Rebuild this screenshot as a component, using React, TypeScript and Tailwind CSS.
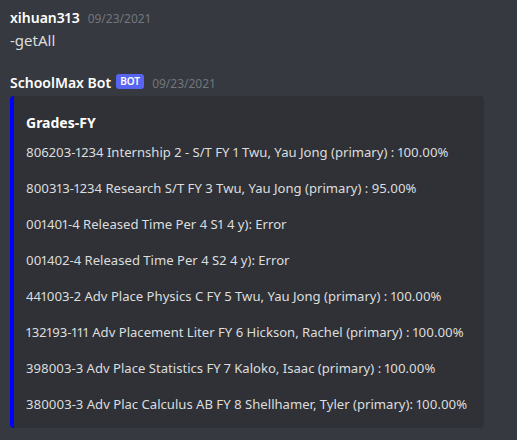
import React from "react";

const lines = [
  "806203-1234 Internship 2 - S/T FY 1 Twu, Yau Jong (primary) : 100.00%",
  "800313-1234 Research S/T FY 3 Twu, Yau Jong (primary) : 95.00%",
  "001401-4 Released Time Per 4 S1 4 y): Error",
  "001402-4 Released Time Per 4 S2 4 y): Error",
  "441003-2 Adv Place Physics C FY 5 Twu, Yau Jong (primary) : 100.00%",
  "132193-111 Adv Placement Liter FY 6 Hickson, Rachel (primary) : 100.00%",
  "398003-3 Adv Place Statistics FY 7 Kaloko, Isaac (primary) : 100.00%",
  "380003-3 Adv Plac Calculus AB FY 8 Shellhamer, Tyler (primary): 100.00%",
];

export default function App() {
  return (
    <div
      className="bg-[#36393f] min-h-[440px] w-[517px] overflow-hidden text-[#dcddde]"
      style={{ fontFamily: "'Noto Sans', sans-serif" }}
    >
      <div className="pl-[10px] pt-[7px]">
        <div className="flex items-baseline h-[22px]">
          <span className="text-[14px] leading-[22px] font-semibold text-white proportional-nums">xihuan313</span>
          <span className="ml-[8px] text-[12px] text-[#72767d]">09/23/2021</span>
        </div>
        <div className="text-[15px] leading-[22px]">-getAll</div>
      </div>
      <div className="pl-[10px] mt-[21px]">
        <div className="flex items-baseline h-[22px]">
          <span className="text-[14px] leading-[22px] font-semibold text-white">SchoolMax Bot</span>
          <span className="relative -top-[3px] ml-[5px] h-[15px] w-[28px] rounded-[3px] bg-[#5865f2] text-white text-[10px] leading-[15px] font-semibold text-center">
            BOT
          </span>
          <span className="ml-[8px] text-[12px] text-[#72767d]">09/23/2021</span>
        </div>
        <div className="mt-[2px] w-[474px] bg-[#2f3136] border-l-4 border-[#0000ff] rounded-[4px] pl-[12px] pr-[16px] pt-[16px] pb-[15px]">
          <div className="text-[14px] leading-[22px] font-bold text-white">Grades-FY</div>
          <div className="mt-[9px] text-[13.1px] leading-[18px] whitespace-nowrap proportional-nums">
            {lines.map((l, i) => (
              <div key={i} className={i > 0 ? "mt-[18px]" : ""}>
                {l}
              </div>
            ))}
          </div>
        </div>
      </div>
    </div>
  );
}
